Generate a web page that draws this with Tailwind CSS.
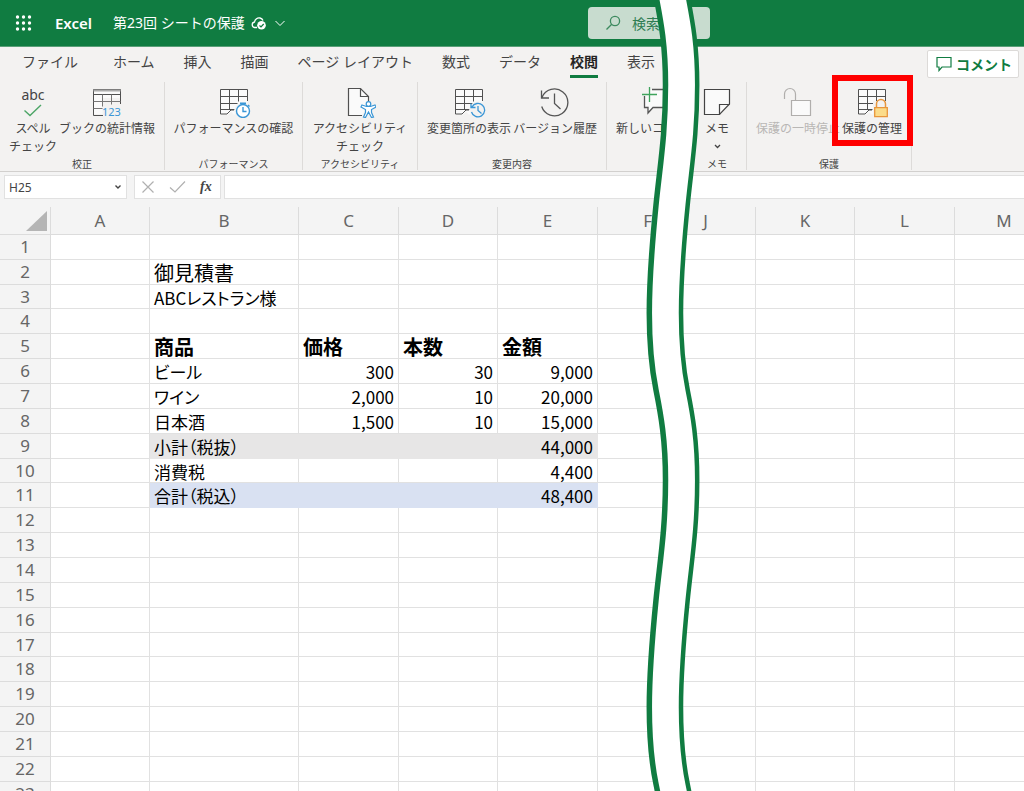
<!DOCTYPE html>
<html lang="ja">
<head>
<meta charset="utf-8">
<title>第23回 シートの保護 - Excel</title>
<script src="https://cdn.jsdelivr.net/npm/@tailwindcss/browser@4"></script>
</head>
<body class="relative h-screen overflow-hidden bg-white text-[#444] font-['Noto_Sans','Noto_Sans_CJK_JP',sans-serif]">

<svg class="hidden">
  <symbol id="sheet" viewBox="0 0 32 32">
    <path d="M3.500 3.500h27v25h-14l-2.500-3-3 3h-7.500z" fill="#fafafa" stroke="none"/>
    <path d="M30.500 15V3.500h-27v24.500h6.500l4-4h3M3.500 10.500h27M3.500 17.500h17M3.500 23.500h14M12.500 3.500v20.500M21.500 3.500v12" fill="none" stroke="#505050"/>
  </symbol>
</svg>

<!-- Title bar -->
<header class="flex h-[47px] items-center border-b border-[#5a9f78] bg-[#107c41] pl-3.5 text-white">
  <button aria-label="アプリ起動ツール" class="w-[41px]">
    <svg width="20" height="20" viewBox="0 0 20 20" fill="#fff"><circle cx="3.500" cy="4" r="1.700"/><circle cx="9.500" cy="4" r="1.700"/><circle cx="15.500" cy="4" r="1.700"/><circle cx="3.500" cy="10" r="1.700"/><circle cx="9.500" cy="10" r="1.700"/><circle cx="15.500" cy="10" r="1.700"/><circle cx="3.500" cy="16" r="1.700"/><circle cx="9.500" cy="16" r="1.700"/><circle cx="15.500" cy="16" r="1.700"/></svg>
  </button>
  <a href="#" class="w-[58px] text-[15px] leading-5 font-semibold">Excel</a>
  <button class="flex items-center text-[14px] leading-5 whitespace-nowrap">
    <span class="w-[138px] text-left">第23回 シートの保護</span>
    <svg width="16" height="16" viewBox="0 0 16 16" fill="none"><path d="M6 12.500H3.500a2.800 2.800 0 0 1 0-5.500C4 4 6.500 2.500 9 3c1.500.3 2.500 1.200 3 2.500" stroke="#fff" stroke-width="1.300"/><circle cx="10.500" cy="10.300" r="4.300" fill="#fff"/><path d="M8.500 10.500l1.500 1.500 2.700-3" stroke="#107c41" stroke-width="1.200"/></svg>
    <svg class="ml-2" width="10" height="7" viewBox="0 0 10 7" fill="none" stroke="#fff"><path d="M.5 1l4.500 4.500L9.500 1"/></svg>
  </button>
  <label class="ml-[303px] flex h-8 w-[122px] items-center rounded-sm bg-[#c8dccf] pl-[17px]">
    <svg width="17" height="17" viewBox="0 0 17 17" fill="none" stroke="#3d8a5f" stroke-width="1.300"><circle cx="10" cy="6" r="4.600"/><path d="M6.700 9.300L1.500 14.500"/></svg>
    <input type="text" aria-label="検索" placeholder="検索" class="ml-2.5 w-[70px] text-[14px] text-[#2f7d53] placeholder:text-[#2f7d53] outline-none">
  </label>
</header>

<!-- Ribbon -->
<section class="relative h-[125px] border-b border-[#d2d0ce] bg-[#f3f2f1]">
  <div class="flex h-[35px] justify-between pl-[22px] pr-[5px]">
    <nav class="flex h-[31px] gap-[29px] text-[14px] leading-[30px] whitespace-nowrap">
      <a href="#" class="mr-1.5">ファイル</a><a href="#">ホーム</a><a href="#">挿入</a><a href="#">描画</a><a href="#">ページ レイアウト</a><a href="#">数式</a><a href="#">データ</a><a href="#" class="border-b-3 border-[#107c41] font-bold text-[#252423]">校閲</a><a href="#">表示</a>
    </nav>
    <button class="mt-[3px] flex h-7 w-[92px] items-center gap-1 rounded-xs border border-[#dcdad8] bg-white pl-2 text-[14px] font-bold text-[#107c41]">
      <svg width="16" height="16" viewBox="0 0 16 16" fill="none" stroke="#107c41" stroke-width="1.200"><path d="M1 1.500h14v9.500H6L3 14.500V11H1z"/></svg>コメント
    </button>
  </div>

  <div class="flex h-[88px] text-[12px] leading-[18px] whitespace-nowrap">
    <div class="flex w-[165px] flex-col justify-between border-r border-[#dddbd9]">
      <div class="flex pl-[9px] gap-0.5">
        <button class="flex w-12 flex-col items-center">
          <span class="mb-0.5 flex h-9 flex-col items-center pt-1"><span class="text-[14px] leading-[18px]">abc</span>
          <svg width="20" height="14" viewBox="0 0 20 14" fill="none" stroke="#4ca566" stroke-width="1.400"><path d="M1.500 6.500l5.500 5L18 1"/></svg></span>
          <span>スペル<br>チェック</span>
        </button>
        <button class="flex flex-col items-center">
          <svg class="mb-0.5 h-9" width="32" height="36" viewBox="0 0 32 36" fill="none"><path d="M2.500 7h27v9h-18v16h-9z" fill="#fafafa"/><path d="M12 33.500H2.500v-26h27V22" stroke="#505050"/><path d="M2.500 8.500h27" stroke="#aaa" stroke-width="2"/><path d="M2.500 12.500h27" stroke="#505050"/><path d="M2.500 19.500h27M2.500 26.500h9M11.500 12.500v12M20.500 12.500v10" stroke="#777"/><text x="11" y="34" font-size="11" fill="#3a96d6">123</text></svg>
          ブックの統計情報
        </button>
      </div>
      <p class="text-center text-[10px] leading-[11px]">校正</p>
    </div>

    <div class="flex w-[138px] flex-col justify-between border-r border-[#dddbd9]">
      <button class="flex flex-col items-center">
        <svg class="mb-0.5 h-9" width="36" height="36" viewBox="0 0 36 36" fill="none"><use href="#sheet" x="1" y="4" width="32" height="32"/><circle cx="27" cy="29" r="8.500" fill="#f3f2f1"/><circle cx="27" cy="29" r="6.500" fill="#fff" stroke="#3a96d6" stroke-width="1.400"/><path d="M27 25v4.500h3.500M24 21.200h6M27 21v2M32 23l1.500 1.500" stroke="#3a96d6" stroke-width="1.400"/></svg>
        パフォーマンスの確認
      </button>
      <p class="text-center text-[10px] leading-[11px]">パフォーマンス</p>
    </div>

    <div class="flex w-[115px] flex-col justify-between border-r border-[#dddbd9]">
      <button class="flex flex-col items-center">
        <svg class="mb-0.5 h-9" width="32" height="36" viewBox="0 0 32 36" fill="none"><path d="M18 33.500H4.500v-27h12l8 8V20" fill="#fafafa" stroke="#505050" stroke-width="1.200"/><path d="M16.500 6.500v8h8" stroke="#505050" stroke-width="1.200"/><path d="M18 23l4.500 1.500h4l4.500-1.500 1 2-4.500 2.500v3l2 4.500-2 .5-3-5.500-3 5.500-2-.5 2-4.500v-3l-4.500-2.500z" fill="#fff" stroke="#3a96d6" stroke-width="1.200"/><circle cx="24.500" cy="22" r="2.300" fill="#fff" stroke="#3a96d6" stroke-width="1.200"/></svg>
        <span>アクセシビリティ<br>チェック</span>
      </button>
      <p class="text-center text-[10px] leading-[11px]">アクセシビリティ</p>
    </div>

    <div class="flex w-[189px] flex-col justify-between border-r border-[#dddbd9]">
      <div class="flex justify-center gap-0.5">
        <button class="flex flex-col items-center">
          <svg class="mb-0.5 h-9" width="36" height="36" viewBox="0 0 36 36" fill="none"><use href="#sheet" x="1" y="4" width="32" height="32"/><circle cx="27" cy="28" r="8.500" fill="#f3f2f1"/><path d="M21 25a6.700 6.700 0 1 1-.5 5M20 21.500v4h4.500M27 24v4.500l3.500 3" stroke="#3a96d6" stroke-width="1.300"/></svg>
          変更箇所の表示
        </button>
        <button class="flex flex-col items-center">
          <svg class="mb-0.5 h-9" width="32" height="36" viewBox="0 0 32 36" fill="none" stroke="#555" stroke-width="1.300"><path d="M3 15.500a13.400 13.400 0 1 1-.3 9M2.500 8.500v7.500h7.500M15.500 11.500v10l6 5.500"/></svg>
          バージョン履歴
        </button>
      </div>
      <p class="text-center text-[10px] leading-[11px]">変更内容</p>
    </div>

    <div class="w-[81px] overflow-hidden pl-[9px]">
      <button class="flex flex-col items-start">
        <svg class="mb-0.5 ml-[25px] h-9" width="36" height="36" viewBox="0 0 36 36" fill="none"><path d="M11 7.500h22v18H11l-4 5v-5H3.500V14" fill="#fafafa"/><path d="M11 7.500h22v18H12l-5 5.500v-5.500H3.500V14" stroke="#555" stroke-width="1.300"/><path d="M8.500 5v15M1 12.500h15" stroke="#3fa35c" stroke-width="1.300"/></svg>
        新しいコメント
      </button>
    </div>

    <div class="flex w-[59px] flex-col justify-between border-r border-[#dddbd9]">
      <button class="flex flex-col items-center">
        <svg class="mb-0.5 h-9" width="30" height="36" viewBox="0 0 30 36" fill="none" stroke="#444" stroke-width="1.200"><path d="M2.500 7.500h25V22L17.500 32.500h-15z" fill="#fafafa"/><path d="M17.500 32.500V22.500h10"/></svg>
        メモ
        <svg class="mt-1.5" width="7" height="5" viewBox="0 0 7 5" fill="none" stroke="#444" stroke-width="1.300"><path d="M1 1l2.500 2.500L6 1"/></svg>
      </button>
      <p class="text-center text-[10px] leading-[11px]">メモ</p>
    </div>

    <div class="flex w-[165px] flex-col justify-between border-r border-[#dddbd9]">
      <div class="flex gap-0.5 pl-[9px]">
        <button disabled class="flex flex-col items-center text-[#b9b7b5]">
          <svg class="mb-0.5 h-9" width="32" height="36" viewBox="0 0 32 36" fill="none" stroke="#b0aeac" stroke-width="1.200"><path d="M2.500 17v-5a5.500 5.500 0 0 1 11 0v6"/><path d="M9.500 18.500h19v15h-19z" fill="#fafafa"/></svg>
          保護の一時停止
        </button>
        <button class="relative flex flex-col items-center">
          <svg class="mb-0.5 h-9" width="32" height="36" viewBox="0 0 32 36" fill="none"><use href="#sheet" x="-1" y="4" width="32" height="32"/><path d="M17 19h15v17H17z" fill="#f3f2f1"/><path d="M20.500 25v-3a4.500 4.500 0 0 1 9 0v3" stroke="#e8963c" stroke-width="1.500"/><path d="M18.700 25.700h12.600v9H18.700z" fill="#fbdc8a" stroke="#e8963c" stroke-width="1.300"/></svg>
          保護の管理
          <span class="absolute -top-[7px] -left-2.5 h-[71px] w-[81px] border-6 border-[#ff0000]"></span>
        </button>
      </div>
      <p class="text-center text-[10px] leading-[11px]">保護</p>
    </div>
  </div>
</section>

<!-- Formula bar -->
<div class="flex h-[35px] items-start bg-[#f4f4f4] pt-[3px] pl-1">
  <div class="flex h-6 w-[123px] items-center border border-[#e1e1e1] bg-white">
    <input type="text" aria-label="名前ボックス" value="H25" class="w-[109px] pt-0.5 pl-1 text-[12px] outline-none">
    <button aria-label="名前の一覧"><svg width="8" height="6" viewBox="0 0 8 6" fill="none" stroke="#444" stroke-width="1.400"><path d="M1.500 1.500L4 4l2.500-2.500"/></svg></button>
  </div>
  <div class="ml-[7px] flex h-6 w-[87px] items-center border border-[#e1e1e1] bg-white pl-1.5">
    <button aria-label="キャンセル" class="w-[28px]"><svg width="14" height="14" viewBox="0 0 14 14" fill="none" stroke="#b0b0b0" stroke-width="1.200"><path d="M1.500 1.500l11 11M12.500 1.500l-11 11"/></svg></button>
    <button aria-label="入力" class="w-[31px]"><svg width="17" height="14" viewBox="0 0 17 14" fill="none" stroke="#b0b0b0" stroke-width="1.200"><path d="M1 7.500l5 4.500L16 1.500"/></svg></button>
    <button aria-label="関数の挿入" class="font-['Liberation_Serif',serif] text-[14px] leading-5 font-bold italic">fx</button>
  </div>
  <input type="text" aria-label="数式バー" class="ml-[3px] h-6 min-w-0 flex-1 border border-r-0 border-[#e1e1e1] bg-white px-2 text-[12px] outline-none">
</div>

<!-- Worksheet -->
<main class="overflow-hidden">
  <table class="w-full min-w-[1054px] table-fixed border-separate border-spacing-0 [&_td]:whitespace-nowrap [&_td]:border-r [&_td]:border-b [&_td]:border-[#e1e1e1] [&_td]:px-1 [&_td]:pt-0.5 [&_td:nth-child(7)]:border-r-0 [&_th]:border-b [&_th]:border-r [&_th]:border-[#dcdcdc] [&_th]:bg-[#f4f4f4] [&_th]:font-normal [&_th]:text-[#666] [&_thead_th:nth-child(7)]:border-r-0">
    <colgroup><col class="w-[51px]"><col class="w-[99px]"><col class="w-[149px]"><col class="w-[100px]"><col class="w-[99px]"><col class="w-[100px]"><col class="w-[58px]"><col class="w-[100px]"><col class="w-[99px]"><col class="w-[100px]"><col></colgroup>
    <thead class="text-[17px] leading-5">
      <tr class="h-7"><th aria-label="すべて選択"><svg class="ml-auto mr-[3px]" width="21" height="20" viewBox="0 0 21 20"><path d="M21 0v20H0z" fill="#b5b5b5"/></svg></th><th>A</th><th>B</th><th>C</th><th>D</th><th>E</th><th class="pr-1 text-right">F</th><th>J</th><th>K</th><th>L</th><th>M</th></tr>
    </thead>
    <tbody id="cells" class="text-[17px] leading-5 text-black font-['Noto_Sans_CJK_JP',sans-serif] [font-feature-settings:'palt']"></tbody>
  </table>
</main>

<!-- Torn strip marking the omitted columns -->
<svg class="pointer-events-none absolute top-0 left-[640px]" width="80" height="900" viewBox="640 0 80 900" fill="none">
  <path fill="#fff" d="M649.300 -81C649.300 -49 651 -30 656 -4S665.500 45 665.500 85C665.500 135 660 165 656 205S649.300 276 649.300 313C649.300 345 651 365 656 390S665.500 440 665.500 480C665.500 530 660 560 656 600S649.300 670 649.300 707C649.300 740 651 760 656 784S665.500 835 665.500 875H697.200C697.200 835 692.700 810 687.700 784S681 740 681 707C681 670 683.700 640 687.700 600S697.200 530 697.200 480C697.200 440 692.700 415 687.700 390S681 345 681 313C681 276 683.700 245 687.700 205S697.200 135 697.200 85C697.200 45 692.700 22 687.700 -4S681 -49 681 -81z"/>
  <path stroke="#107c41" stroke-width="5.500" d="M649.300 -81C649.300 -49 651 -30 656 -4S665.500 45 665.500 85C665.500 135 660 165 656 205S649.300 276 649.300 313C649.300 345 651 365 656 390S665.500 440 665.500 480C665.500 530 660 560 656 600S649.300 670 649.300 707C649.300 740 651 760 656 784S665.500 835 665.500 875"/>
  <path stroke="#107c41" stroke-width="4.500" d="M681 -81C681 -49 682.700 -30 687.700 -4S697.200 45 697.200 85C697.200 135 691.700 165 687.700 205S681 276 681 313C681 345 682.700 365 687.700 390S697.200 440 697.200 480C697.200 530 691.700 560 687.700 600S681 670 681 707C681 740 682.700 760 687.700 784S697.200 835 697.200 875"/>
</svg>

<script>
  const data = {
    2: ['御見積書'], 3: ['ABCレストラン様'], 5: ['商品', '価格', '本数', '金額'],
    6: ['ビール', '300', '30', '9,000'], 7: ['ワイン', '2,000', '10', '20,000'], 8: ['日本酒', '1,500', '10', '15,000'],
    9: ['小計（税抜）', '', '', '44,000'], 10: ['消費税', '', '', '4,400'], 11: ['合計（税込）', '', '', '48,400']
  };
  const fill = { 9: 'bg-[#e7e6e6] border-[#e7e6e6]!', 11: 'bg-[#d9e1f2] border-[#d9e1f2]!' };
  const type = { 2: 'text-[20px]', 5: 'text-[20px] font-bold' };
  let html = '';
  for (let r = 1; r <= 23; r++) {
    const row = data[r] || [];
    html += `<tr class="${[3, 10, 17].includes(r) ? 'h-6' : 'h-[25px]'}"><th class="text-[17px] leading-5 font-['Noto_Sans',sans-serif]">${r}</th><td></td>`;
    for (let c = 0; c < 4; c++) {
      const align = /^\d/.test(row[c] || '') ? 'text-right' : 'text-left';
      html += `<td class="${align} ${fill[r] || ''} ${type[r] || ''}">${row[c] || ''}</td>`;
    }
    html += '<td></td><td></td><td></td><td></td><td></td></tr>';
  }
  document.getElementById('cells').innerHTML = html;
</script>
</body>
</html>
